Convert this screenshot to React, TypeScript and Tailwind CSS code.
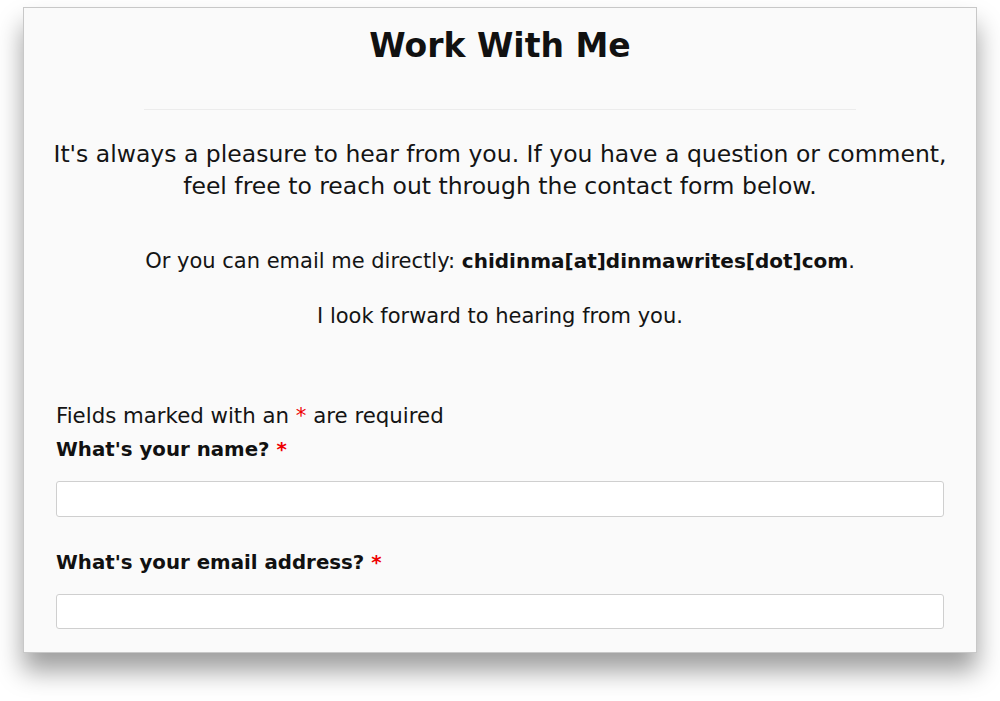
import React from 'react';

export default function App() {
  return (
    <div className="w-[1000px] h-[701px] bg-white pt-[7px] pl-[23px] overflow-hidden" style={{ fontFamily: '"DejaVu Sans", sans-serif' }}>
      <div className="w-[954px] h-[646px] bg-[#fafafa] border border-[#c8c8c8] shadow-[0_18px_24px_rgba(0,0,0,0.38)] flex flex-col px-[32px]">
        {/* Header */}
        <h1 className="shrink-0 text-center text-[33px] leading-[40px] font-bold text-[#111] mt-[18px]">Work With Me</h1>
        <div className="shrink-0 mx-auto mt-[43px] w-[712px] h-px bg-[#ececec]" />

        {/* Intro */}
        <div className="shrink-0 -mx-[20px] text-center text-[#141414] text-[21px] leading-[32px] mt-[28px]">
          <p className="text-[23.5px] whitespace-nowrap">It's always a pleasure to hear from you. If you have a question or comment,<br />feel free to reach out through the contact form below.</p>
          <p className="mt-[43px]">
            Or you can email me directly: <span className="font-bold text-[20px] text-[#111]">chidinma[at]dinmawrites[dot]com</span>.
          </p>
          <p className="mt-[23px]">I look forward to hearing from you.</p>
        </div>

        {/* Form */}
        <div className="shrink-0 mt-[69px] text-[#141414]">
          <p className="text-[21.3px] leading-[30px]">
            Fields marked with an <span className="text-[#e00]">*</span> are required
          </p>
          <label className="block mt-[4px] text-[19.8px] leading-[30px] font-bold text-[#111]">
            What's your name? <span className="text-[#e00]">*</span>
          </label>
          <input className="mt-[16px] block w-full h-[36px] bg-white border border-[#cfcfcf] rounded-[3px]" />
          <label className="block mt-[31px] text-[19.8px] leading-[30px] font-bold text-[#111]">
            What's your email address? <span className="text-[#e00]">*</span>
          </label>
          <input className="mt-[16px] block w-full h-[35px] bg-white border border-[#cfcfcf] rounded-[3px]" />
        </div>
      </div>
    </div>
  );
}
